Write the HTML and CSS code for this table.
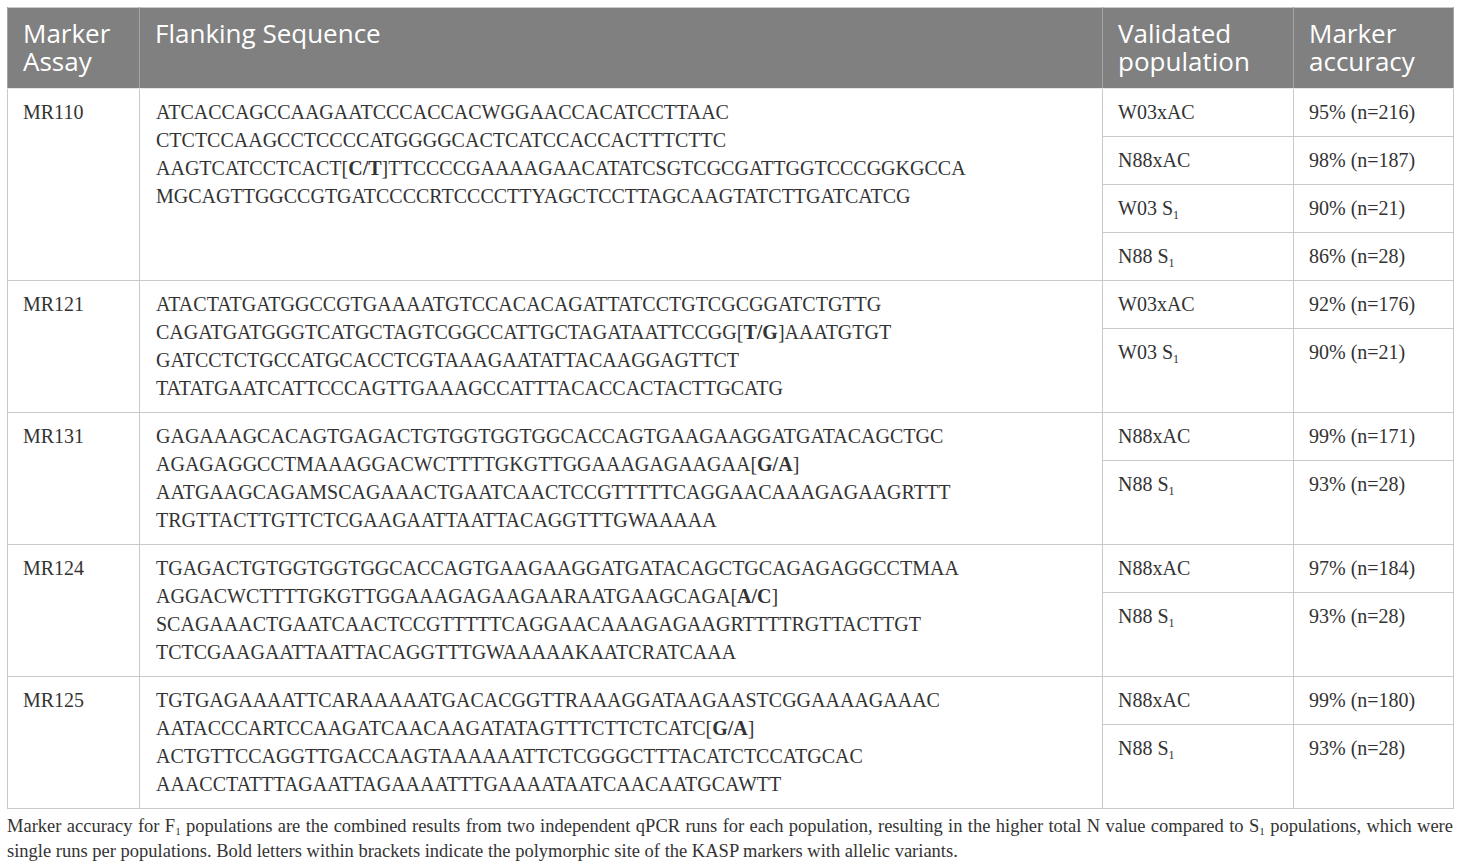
FILE: index.html
```html
<!DOCTYPE html>
<html lang="en">
<head>
<meta charset="utf-8">
<title>KASP marker validation</title>
<link rel="stylesheet" href="styles.css">
</head>
<body>
<div class="page">
<table class="markers">
  <colgroup>
    <col class="c-assay">
    <col class="c-seq">
    <col class="c-pop">
    <col class="c-acc">
  </colgroup>
  <thead>
    <tr>
      <th>Marker<br>Assay</th>
      <th>Flanking Sequence</th>
      <th>Validated<br>population</th>
      <th>Marker<br>accuracy</th>
    </tr>
  </thead>
  <tbody>
    <tr class="sub">
      <td rowspan="4">MR110</td>
      <td rowspan="4" class="seq">ATCACCAGCCAAGAATCCCACCACWGGAACCACATCCTTAAC<br>CTCTCCAAGCCTCCCCATGGGGCACTCATCCACCACTTTCTTC<br>AAGTCATCCTCACT[<b>C/T</b>]TTCCCCGAAAAGAACATATCSGTCGCGATTGGTCCCGGKGCCA<br>MGCAGTTGGCCGTGATCCCCRTCCCCTTYAGCTCCTTAGCAAGTATCTTGATCATCG</td>
      <td>W03xAC</td>
      <td>95% (n=216)</td>
    </tr>
    <tr class="sub"><td>N88xAC</td><td>98% (n=187)</td></tr>
    <tr class="sub"><td>W03 S<sub>1</sub></td><td>90% (n=21)</td></tr>
    <tr class="sub"><td>N88 S<sub>1</sub></td><td>86% (n=28)</td></tr>

    <tr class="sub">
      <td rowspan="2">MR121</td>
      <td rowspan="2" class="seq">ATACTATGATGGCCGTGAAAATGTCCACACAGATTATCCTGTCGCGGATCTGTTG<br>CAGATGATGGGTCATGCTAGTCGGCCATTGCTAGATAATTCCGG[<b>T/G</b>]AAATGTGT<br>GATCCTCTGCCATGCACCTCGTAAAGAATATTACAAGGAGTTCT<br>TATATGAATCATTCCCAGTTGAAAGCCATTTACACCACTACTTGCATG</td>
      <td>W03xAC</td>
      <td>92% (n=176)</td>
    </tr>
    <tr class="rest"><td>W03 S<sub>1</sub></td><td>90% (n=21)</td></tr>

    <tr class="sub">
      <td rowspan="2">MR131</td>
      <td rowspan="2" class="seq">GAGAAAGCACAGTGAGACTGTGGTGGTGGCACCAGTGAAGAAGGATGATACAGCTGC<br>AGAGAGGCCTMAAAGGACWCTTTTGKGTTGGAAAGAGAAGAA[<b>G/A</b>]<br>AATGAAGCAGAMSCAGAAACTGAATCAACTCCGTTTTTCAGGAACAAAGAGAAGRTTT<br>TRGTTACTTGTTCTCGAAGAATTAATTACAGGTTTGWAAAAA</td>
      <td>N88xAC</td>
      <td>99% (n=171)</td>
    </tr>
    <tr class="rest"><td>N88 S<sub>1</sub></td><td>93% (n=28)</td></tr>

    <tr class="sub">
      <td rowspan="2">MR124</td>
      <td rowspan="2" class="seq">TGAGACTGTGGTGGTGGCACCAGTGAAGAAGGATGATACAGCTGCAGAGAGGCCTMAA<br>AGGACWCTTTTGKGTTGGAAAGAGAAGAARAATGAAGCAGA[<b>A/C</b>]<br>SCAGAAACTGAATCAACTCCGTTTTTCAGGAACAAAGAGAAGRTTTTRGTTACTTGT<br>TCTCGAAGAATTAATTACAGGTTTGWAAAAAKAATCRATCAAA</td>
      <td>N88xAC</td>
      <td>97% (n=184)</td>
    </tr>
    <tr class="rest"><td>N88 S<sub>1</sub></td><td>93% (n=28)</td></tr>

    <tr class="sub">
      <td rowspan="2">MR125</td>
      <td rowspan="2" class="seq">TGTGAGAAAATTCARAAAAATGACACGGTTRAAAGGATAAGAASTCGGAAAAGAAAC<br>AATACCCARTCCAAGATCAACAAGATATAGTTTCTTCTCATC[<b>G/A</b>]<br>ACTGTTCCAGGTTGACCAAGTAAAAAATTCTCGGGCTTTACATCTCCATGCAC<br>AAACCTATTTAGAATTAGAAAATTTGAAAATAATCAACAATGCAWTT</td>
      <td>N88xAC</td>
      <td>99% (n=180)</td>
    </tr>
    <tr class="rest"><td>N88 S<sub>1</sub></td><td>93% (n=28)</td></tr>
  </tbody>
</table>
<p class="note">Marker accuracy for F<sub>1</sub> populations are the combined results from two independent qPCR runs for each population, resulting in the higher total N value compared to S<sub>1</sub> populations, which were single runs per populations. Bold letters within brackets indicate the polymorphic site of the KASP markers with allelic variants.</p>
</div>
</body>
</html>
```

FILE: styles.css
```css
html, body {
  margin: 0;
  padding: 0;
  background: #ffffff;
}

.page {
  padding: 7px 7px 0 7px;
}

.markers {
  width: 1446px;
  border-collapse: collapse;
  table-layout: fixed;
  font-family: "Liberation Serif", "Times New Roman", serif;
  font-size: 20px;
  color: #333333;
  border: 1px solid #c9c9c9;
}

.c-assay { width: 132px; }
.c-seq { width: 963px; }
.c-pop { width: 191px; }
.c-acc { width: 160px; }

.markers th {
  background: #7f807f;
  color: #ffffff;
  font-family: "Open Sans", "Noto Sans", sans-serif;
  font-weight: 400;
  font-size: 26px;
  line-height: 28px;
  text-align: left;
  vertical-align: top;
  padding: 11px 15px 13px 15px;
  height: 56px;
  border-left: 1px solid #a3a4a3;
  border-right: 1px solid #a3a4a3;
  border-bottom: 1px solid #e6e6e6;
}

.markers td {
  vertical-align: top;
  text-align: left;
  line-height: 28px;
  padding: 9px 15px 9px 15px;
  border: 1px solid #c9c9c9;
  white-space: nowrap;
}

.markers td.seq {
  padding-left: 16px;
}

.markers tr.sub {
  height: 48px;
}

.markers tr.rest {
  height: 84px;
}

.markers b {
  font-weight: 700;
}

sub {
  font-size: 0.6em;
  line-height: 1;
  vertical-align: baseline;
  position: relative;
  top: 0.3em;
}

.note {
  margin: 5px 0 0 0;
  width: 1446px;
  font-family: "Liberation Serif", "Times New Roman", serif;
  font-size: 18.5px;
  line-height: 25px;
  color: #333333;
  text-align: justify;
}
```
